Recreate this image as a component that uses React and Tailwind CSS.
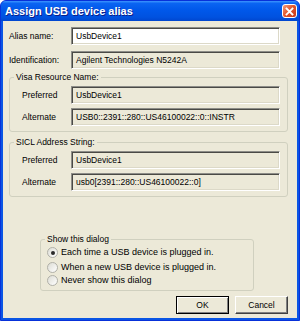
import React from "react";

const font = { fontFamily: '"Liberation Sans", Arial, sans-serif' };

function Field({ value, white }) {
  return (
    <div
      className={`h-[18px] w-[209px] flex items-center pl-[4px] text-[8.5px] text-black border-t border-l border-b border-r border-t-[#8d8d88] border-l-[#8d8d88] border-b-white border-r-white shadow-[inset_1px_1px_0_#4a4a46,inset_-1px_-1px_0_#dcd9c8] ${
        white ? "bg-white" : "bg-[#ece9d8]"
      }`}
    >
      {value}
    </div>
  );
}

function Group({ title, children, className }) {
  return (
    <div className={`relative border border-[#d0d0bf] rounded-[3px] ${className}`}>
      <span className="absolute -top-[6px] left-[4px] px-[2px] bg-[#ece9d8] text-[8.5px] leading-[10px] text-black">
        {title}
      </span>
      {children}
    </div>
  );
}

function Radio({ checked, label, className }) {
  return (
    <div className={`flex items-center h-[13px] ${className || ""}`}>
      <div className="w-[11px] h-[11px] rounded-full border border-[#b0b0a8] bg-[linear-gradient(135deg,#dcdcd4,#ffffff)] flex items-center justify-center">
        {checked && <div className="w-[4px] h-[4px] rounded-full bg-[#2a2a2a]" />}
      </div>
      <span className="ml-[3px] text-[9px] text-black">{label}</span>
    </div>
  );
}

export default function App() {
  return (
    <div
      style={font}
      className="w-[300px] h-[321px] rounded-t-[6px] bg-[#0a55e4] border border-[#0831d9] flex flex-col overflow-hidden"
    >
      <div className="h-[20px] shrink-0 flex items-center justify-between pl-[4px] pr-[2px] bg-[linear-gradient(to_bottom,#3d95ff_0%,#0a64f2_12%,#0058ea_45%,#0052e0_80%,#0046cf_100%)]">
        <span className="text-white font-bold text-[11px] [text-shadow:1px_1px_0_#0a1e8a]">
          Assign USB device alias
        </span>
        <div className="w-[15px] h-[14px] rounded-[3px] border border-white bg-[linear-gradient(135deg,#f39b7a,#e0542a_50%,#c5391a)] flex items-center justify-center">
          <svg width="9" height="9" viewBox="0 0 9 9">
            <path d="M1.5 1.5 L7.5 7.5 M7.5 1.5 L1.5 7.5" stroke="white" strokeWidth="1.8" strokeLinecap="square" />
          </svg>
        </div>
      </div>
      <div className="flex-1 mx-[2px] mb-[2px] bg-[#ece9d8] flex flex-col pt-[6px] pl-[6px]">
        <div className="flex items-center h-[18px]">
          <span className="w-[62px] text-[8.5px] text-black">Alias name:</span>
          <Field value="UsbDevice1" white />
        </div>
        <div className="flex items-center h-[18px] mt-[6px]">
          <span className="w-[62px] text-[8.5px] text-black">Identification:</span>
          <Field value="Agilent Technologies N5242A" />
        </div>

        <Group title="Visa Resource Name:" className="mt-[8px] w-[279px] h-[55px] pt-[8px] pl-[12px]">
          <div className="flex items-center h-[18px]">
            <span className="w-[49px] text-[8.5px] text-black">Preferred</span>
            <Field value="UsbDevice1" />
          </div>
          <div className="flex items-center h-[18px] mt-[4px]">
            <span className="w-[49px] text-[8.5px] text-black">Alternate</span>
            <Field value="USB0::2391::280::US46100022::0::INSTR" />
          </div>
        </Group>

        <Group title="SICL Address String:" className="mt-[10px] w-[279px] h-[55px] pt-[8px] pl-[12px]">
          <div className="flex items-center h-[18px]">
            <span className="w-[49px] text-[8.5px] text-black">Preferred</span>
            <Field value="UsbDevice1" />
          </div>
          <div className="flex items-center h-[18px] mt-[4px]">
            <span className="w-[49px] text-[8.5px] text-black">Alternate</span>
            <Field value="usb0[2391::280::US46100022::0]" />
          </div>
        </Group>

        <Group title="Show this dialog" className="mt-[42px] ml-[31px] w-[214px] h-[52px] pt-[6px] pl-[6px]">
          <Radio checked label="Each time a USB device is plugged in." />
          <Radio label="When a new USB device is plugged in." className="mt-[2px]" />
          <Radio label="Never show this dialog" />
        </Group>

        <div className="flex justify-end gap-[6px] pr-[9px] mt-[5px]">
          <button className="w-[53px] h-[18px] bg-[#ece9d8] border border-black shadow-[inset_1px_1px_0_#ffffff,inset_-1px_-1px_0_#808080] text-[8.5px] text-black">
            OK
          </button>
          <button className="w-[53px] h-[18px] bg-[#ece9d8] border-t border-l border-b border-r border-t-white border-l-white border-b-[#404040] border-r-[#404040] shadow-[inset_-1px_-1px_0_#808080] text-[8.5px] text-black">
            Cancel
          </button>
        </div>
      </div>
    </div>
  );
}
